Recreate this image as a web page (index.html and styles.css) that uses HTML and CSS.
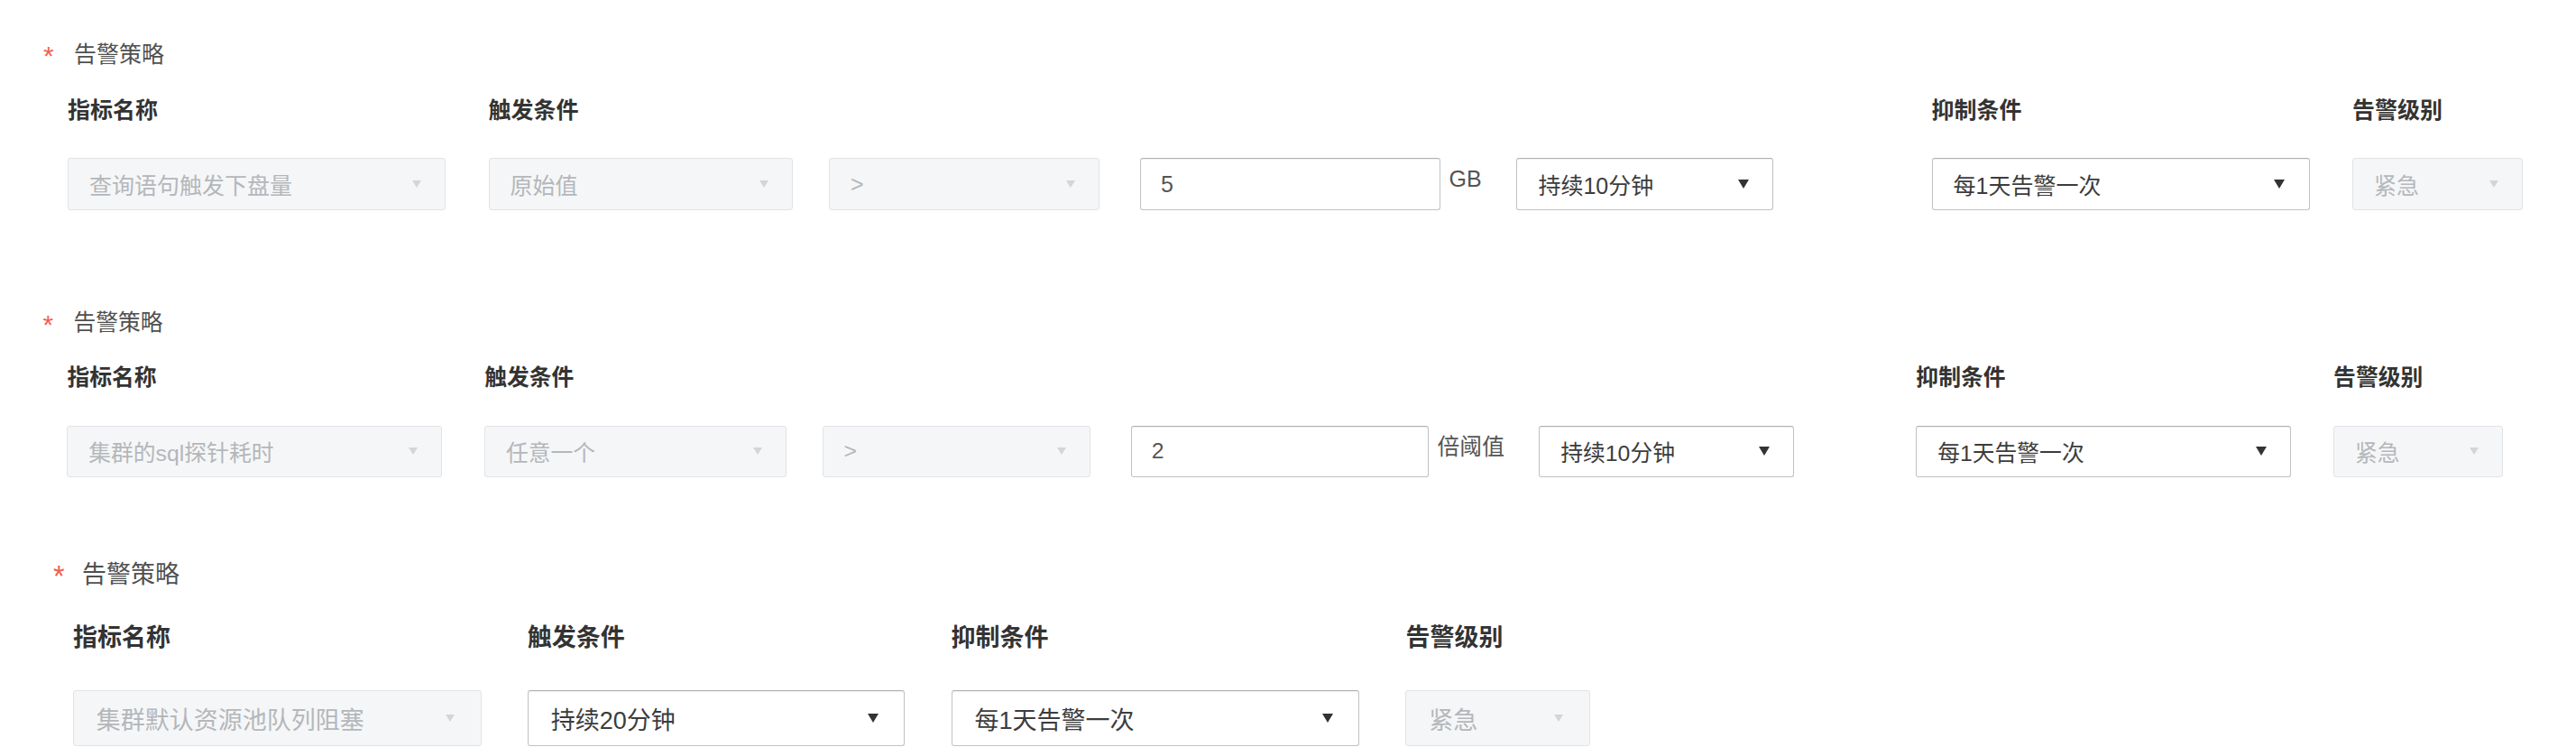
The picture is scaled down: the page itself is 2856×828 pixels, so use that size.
FILE: index.html
```html
<!DOCTYPE html>
<html lang="zh-CN">
<head>
    <meta charset="UTF-8">
    <meta name="viewport" content="width=device-width, initial-scale=1.0">
    <title>告警策略</title>
    <link rel="stylesheet" href="styles.css">
</head>
<body>
    <!-- 策略：查询语句触发下盘量 -->
    <div class="policy policy-first">
        <div class="policy-title"><span class="required">*</span>告警策略</div>
        <div class="policy-row">
            <div class="field field-metric">
                <div class="field-label">指标名称</div>
                <div class="select disabled"><span>查询语句触发下盘量</span></div>
            </div>
            <div class="field field-trigger">
                <div class="field-label">触发条件</div>
                <div class="trigger-row">
                    <div class="select disabled select-mode"><span>原始值</span></div>
                    <div class="select disabled select-op"><span>&gt;</span></div>
                    <input class="text-input" type="text" value="5">
                    <span class="unit">GB</span>
                    <div class="select select-duration"><span>持续10分钟</span></div>
                </div>
            </div>
            <div class="field field-suppress">
                <div class="field-label">抑制条件</div>
                <div class="select"><span>每1天告警一次</span></div>
            </div>
            <div class="field field-level">
                <div class="field-label">告警级别</div>
                <div class="select disabled"><span>紧急</span></div>
            </div>
        </div>
    </div>

    <!-- 策略：集群的sql探针耗时 -->
    <div class="policy policy-second">
        <div class="policy-title"><span class="required">*</span>告警策略</div>
        <div class="policy-row">
            <div class="field field-metric">
                <div class="field-label">指标名称</div>
                <div class="select disabled"><span>集群的sql探针耗时</span></div>
            </div>
            <div class="field field-trigger">
                <div class="field-label">触发条件</div>
                <div class="trigger-row">
                    <div class="select disabled select-mode"><span>任意一个</span></div>
                    <div class="select disabled select-op"><span>&gt;</span></div>
                    <input class="text-input" type="text" value="2">
                    <span class="unit">倍阈值</span>
                    <div class="select select-duration"><span>持续10分钟</span></div>
                </div>
            </div>
            <div class="field field-suppress">
                <div class="field-label">抑制条件</div>
                <div class="select"><span>每1天告警一次</span></div>
            </div>
            <div class="field field-level">
                <div class="field-label">告警级别</div>
                <div class="select disabled"><span>紧急</span></div>
            </div>
        </div>
    </div>

    <!-- 策略：集群默认资源池队列阻塞 -->
    <div class="policy policy-third">
        <div class="policy-title"><span class="required">*</span>告警策略</div>
        <div class="policy-row">
            <div class="field field-metric">
                <div class="field-label">指标名称</div>
                <div class="select disabled"><span>集群默认资源池队列阻塞</span></div>
            </div>
            <div class="field field-trigger-short">
                <div class="field-label">触发条件</div>
                <div class="select"><span>持续20分钟</span></div>
            </div>
            <div class="field field-suppress">
                <div class="field-label">抑制条件</div>
                <div class="select"><span>每1天告警一次</span></div>
            </div>
            <div class="field field-level">
                <div class="field-label">告警级别</div>
                <div class="select disabled"><span>紧急</span></div>
            </div>
        </div>
    </div>
</body>
</html>
```

FILE: styles.css
```css
body {
    margin: 0;
    background-color: #fff;
    font-family: "Liberation Sans", "Noto Sans CJK SC", sans-serif;
    color: #333;
    overflow: hidden;
}

/* Policy blocks */
.policy {
    font-size: 25px;
    padding-left: 3em;
}

.policy-first {
    padding-top: 42px;
}

.policy-second {
    font-size: 24.8px;
    margin-top: 4.3em;
}

.policy-third {
    font-size: 27px;
    margin-top: 3.3em;
}

.policy-title {
    display: flex;
    align-items: center;
    line-height: 1.44em;
    margin-left: -27px;
    margin-bottom: 1.04em;
    color: #505050;
}

.policy-third .policy-title {
    margin-left: -22px;
    margin-bottom: 1.15em;
}

.required {
    width: 34px;
    color: #f25f4f;
    font-size: 1.2em;
    line-height: 1;
    position: relative;
    top: 2px;
}

.policy-third .required {
    width: 32px;
}

.policy-row {
    display: flex;
    gap: 1.9em;
}

.field-label {
    line-height: 1.44em;
    margin-bottom: 1.4em;
    font-weight: bold;
    color: #333;
}

.field-metric,
.field-suppress {
    width: 16.76em;
}

.field-trigger {
    width: 62.1em;
}

.field-trigger-short {
    width: 15.5em;
}

.field-level {
    width: 7.56em;
}

.trigger-row {
    display: flex;
    align-items: center;
}

/* Select boxes */
.select {
    box-sizing: border-box;
    height: 2.32em;
    display: flex;
    align-items: center;
    justify-content: space-between;
    padding: 0 1.05em 0 0.92em;
    background-color: #fff;
    border: 1px solid #c0c2c6;
    border-top-color: #aeb0b4;
    border-radius: 3px;
    box-shadow: inset 0 1px 1px rgba(0, 0, 0, 0.07);
    color: #3c3c3c;
    white-space: nowrap;
}

.select::after {
    content: "";
    border-left: 6px solid transparent;
    border-right: 6px solid transparent;
    border-top: 10px solid #333;
}

.select.disabled {
    background-color: #f5f6f7;
    border-color: #e1e3e6;
    box-shadow: none;
    color: #b4b7bb;
}

.select.disabled::after {
    border-left-width: 5px;
    border-right-width: 5px;
    border-top: 8px solid #d3d5d9;
}

.select-mode {
    width: 13.5em;
}

.select-op {
    width: 12em;
    margin-left: 1.6em;
}

.select-duration {
    width: 11.4em;
}

.text-input {
    box-sizing: border-box;
    width: 13.3em;
    height: 2.32em;
    margin: 0 0 0 1.8em;
    padding: 0 0.88em;
    font-family: inherit;
    font-size: 1em;
    color: #555;
    background-color: #fff;
    border: 1px solid #c0c2c6;
    border-top-color: #aeb0b4;
    border-radius: 3px;
    box-shadow: inset 0 1px 1px rgba(0, 0, 0, 0.07);
    outline: none;
}

.unit {
    margin: 0 1.55em 0 0.4em;
    color: #555;
    align-self: flex-start;
    line-height: 1.5em;
    padding-top: 0.2em;
}
```
